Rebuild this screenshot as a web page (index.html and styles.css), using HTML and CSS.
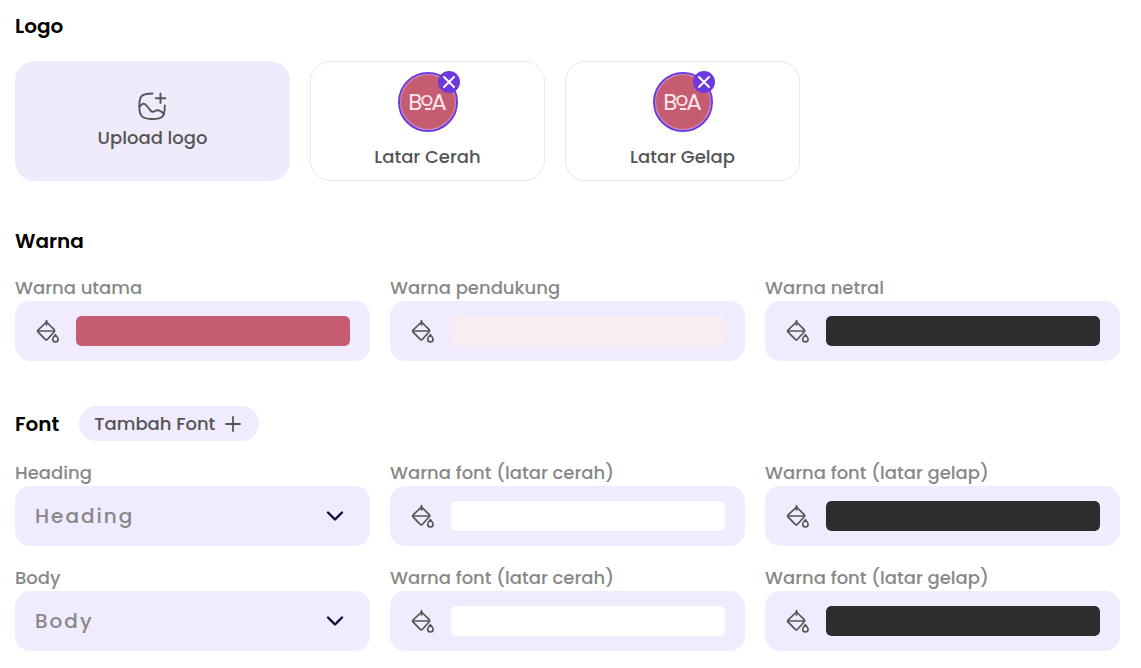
FILE: index.html
```html
<!DOCTYPE html>
<html lang="id">
<head>
<meta charset="utf-8">
<meta name="viewport" content="width=device-width, initial-scale=1">
<title>Brand</title>
<link rel="stylesheet" href="styles.css">
</head>
<body>
<svg class="defs" aria-hidden="true">
  <symbol id="bucket" viewBox="0 0 26 26">
    <g fill="none" stroke="currentColor" stroke-width="1.7" stroke-linejoin="round" stroke-linecap="round">
      <path d="M11.500 4L19 11.300Q20.200 12.700 19 14L12.500 21.200Q11.300 22.500 10 21.200L3.200 14.200Q2 13 3.200 11.800Z"/>
      <path d="M11.500 2.500V7M2.800 13H19.500"/>
      <path d="M20.400 16.700Q17.700 19.700 17.700 21.200A2.700 2.700 0 0 0 23.100 21.200Q23.100 19.700 20.400 16.700Z"/>
    </g>
  </symbol>
  <symbol id="cross" viewBox="0 0 22 22">
    <path d="M6 6L16 16M16 6L6 16" fill="none" stroke="#fff" stroke-width="2" stroke-linecap="round"/>
  </symbol>
  <symbol id="chevron" viewBox="0 0 20 20">
    <path d="M3 6.500L10 13.500L17 6.500" fill="none" stroke="#120b36" stroke-width="2.400" stroke-linecap="round" stroke-linejoin="round"/>
  </symbol>
</svg>
<main class="page">
  <section class="section">
    <h2 class="title">Logo</h2>
    <div class="logos">
      <button class="upload" type="button">
        <svg class="upload-icon" viewBox="0 0 30 30" aria-hidden="true">
          <g fill="none" stroke="currentColor" stroke-width="1.900" stroke-linecap="round" stroke-linejoin="round">
            <path d="M14.500 2.500C4 2.500 1.300 4.500 1.300 15S4 28 14.500 28S26.800 25.500 26.800 14.500"/>
            <path d="M1.800 15.500C4 12 6.500 12 8.500 14.500L12.500 19.500C14 21.200 15.500 21 17 20C19.500 18.300 22 18.800 26 23"/>
            <path d="M22.500 2.500V12M17.800 7.300H27.300"/>
          </g>
        </svg>
        Upload logo
      </button>
      <div class="logo-card">
        <div class="avatar">
          <div class="mark">B<span class="mark-o">o</span>A</div>
          <button class="remove" type="button" aria-label="Hapus Latar Cerah"><svg class="remove-icon"><use href="#cross"/></svg></button>
        </div>
        <span>Latar Cerah</span>
      </div>
      <div class="logo-card">
        <div class="avatar">
          <div class="mark">B<span class="mark-o">o</span>A</div>
          <button class="remove" type="button" aria-label="Hapus Latar Gelap"><svg class="remove-icon"><use href="#cross"/></svg></button>
        </div>
        <span>Latar Gelap</span>
      </div>
    </div>
  </section>

  <section class="section">
    <h2 class="title">Warna</h2>
    <div class="fields">
      <div><label class="label" for="c1">Warna utama</label>
        <div class="field"><svg class="bucket"><use href="#bucket"/></svg><input class="color" type="color" id="c1" value="#c65c71"></div></div>
      <div><label class="label" for="c2">Warna pendukung</label>
        <div class="field"><svg class="bucket"><use href="#bucket"/></svg><input class="color" type="color" id="c2" value="#f9edf1"></div></div>
      <div><label class="label" for="c3">Warna netral</label>
        <div class="field"><svg class="bucket"><use href="#bucket"/></svg><input class="color" type="color" id="c3" value="#2d2d2d"></div></div>
    </div>
  </section>

  <section class="section">
    <div class="font-head">
      <h2 class="title">Font</h2>
      <button class="add" type="button">Tambah Font
        <svg class="plus" viewBox="0 0 16 16" aria-hidden="true"><path d="M8 1V15M1 8H15" stroke="currentColor" stroke-width="1.800" stroke-linecap="round"/></svg>
      </button>
    </div>
    <div class="fields">
      <div><label class="label" for="f1">Heading</label>
        <div class="field picker"><select class="select" id="f1"><option>Heading</option></select><svg class="chevron"><use href="#chevron"/></svg></div></div>
      <div><label class="label" for="c4">Warna font (latar cerah)</label>
        <div class="field"><svg class="bucket"><use href="#bucket"/></svg><input class="color" type="color" id="c4" value="#ffffff"></div></div>
      <div><label class="label" for="c5">Warna font (latar gelap)</label>
        <div class="field"><svg class="bucket"><use href="#bucket"/></svg><input class="color" type="color" id="c5" value="#2d2d2d"></div></div>
      <div><label class="label" for="f2">Body</label>
        <div class="field picker"><select class="select" id="f2"><option>Body</option></select><svg class="chevron"><use href="#chevron"/></svg></div></div>
      <div><label class="label" for="c6">Warna font (latar cerah)</label>
        <div class="field"><svg class="bucket"><use href="#bucket"/></svg><input class="color" type="color" id="c6" value="#ffffff"></div></div>
      <div><label class="label" for="c7">Warna font (latar gelap)</label>
        <div class="field"><svg class="bucket"><use href="#bucket"/></svg><input class="color" type="color" id="c7" value="#2d2d2d"></div></div>
    </div>
  </section>
</main>
</body>
</html>
```

FILE: styles.css
```css
* {
  box-sizing: border-box;
}

body {
  margin: 0;
  background: #fff;
  color: #555;
  font: 500 18px/27px Poppins, Inter, sans-serif;
}

button,
select {
  border: 0;
  color: inherit;
  font: inherit;
  cursor: pointer;
}

.defs {
  position: absolute;
  width: 0;
  height: 0;
}

.page {
  display: flex;
  flex-direction: column;
  gap: 45px;
  padding: 11px 21px 16px 15px;
}

.section {
  display: flex;
  flex-direction: column;
  gap: 18px;
}

.title {
  margin: 0;
  color: #000;
  font-size: 20px;
  font-weight: 600;
  line-height: 30px;
}

.logos {
  display: flex;
  flex-wrap: wrap;
  gap: 20px;
  padding-top: 2px;
}

.upload {
  display: flex;
  flex-direction: column;
  align-items: center;
  justify-content: center;
  gap: 3px;
  width: 275px;
  min-height: 120px;
  border-radius: 20px;
  background: #efebfc;
}

.upload-icon {
  width: 30px;
  height: 30px;
}

.logo-card {
  display: flex;
  flex-direction: column;
  align-items: center;
  gap: 11px;
  width: 235px;
  padding: 10px;
  border: 1px solid #e9e9e9;
  border-radius: 20px;
}

.avatar {
  position: relative;
  width: 60px;
  height: 60px;
  padding: 1px;
  border: 2px solid #6c39e0;
  border-radius: 50%;
  background: #c65c71;
  background-clip: padding-box;
  box-shadow: inset 0 0 0 1px #d391bb;
}

.mark {
  display: flex;
  justify-content: center;
  color: #fbe6ea;
  font: 23px/54px Poppins, Inter, sans-serif;
}

.mark-o {
  position: relative;
  margin: 0 -2px;
  font-size: 20px;
  line-height: 48px;
}

.mark-o::after {
  content: "";
  position: absolute;
  top: 33px;
  right: 2px;
  width: 6px;
  height: 2px;
  background: #fbe6ea;
}

.remove {
  position: absolute;
  top: -3px;
  right: -4px;
  width: 22px;
  height: 22px;
  padding: 0;
  border-radius: 50%;
  background: #6c39e0;
}

.remove-icon {
  display: block;
  width: 22px;
  height: 22px;
}

.fields {
  display: grid;
  grid-template-columns: repeat(3, 1fr);
  gap: 18px 20px;
}

.label {
  display: block;
  color: #888;
}

.field {
  display: flex;
  align-items: center;
  gap: 15px;
  height: 60px;
  padding: 0 20px;
  border-radius: 15px;
  background: #f0ebff;
}

.bucket {
  flex: none;
  width: 26px;
  height: 26px;
}

.color {
  flex: 1;
  min-width: 0;
  height: 30px;
  padding: 0;
  border: 0;
  border-radius: 5px;
  background: none;
  appearance: none;
  cursor: pointer;
}

.color::-webkit-color-swatch-wrapper {
  padding: 0;
}

.color::-webkit-color-swatch {
  border: 0;
  border-radius: 5px;
}

.picker {
  position: relative;
  padding: 0;
}

.select {
  width: 100%;
  height: 60px;
  padding: 0 50px 0 20px;
  border-radius: 15px;
  background: transparent;
  color: #888;
  font-size: 20px;
  letter-spacing: 2px;
  appearance: none;
}

.chevron {
  position: absolute;
  right: 25px;
  width: 20px;
  height: 20px;
  pointer-events: none;
}

.font-head {
  display: flex;
  align-items: center;
  gap: 20px;
}

.add {
  display: flex;
  align-items: center;
  gap: 10px;
  height: 35px;
  padding: 0 18px 0 15px;
  border-radius: 18px;
  background: #f0ebff;
}

.plus {
  width: 16px;
  height: 16px;
}
```
